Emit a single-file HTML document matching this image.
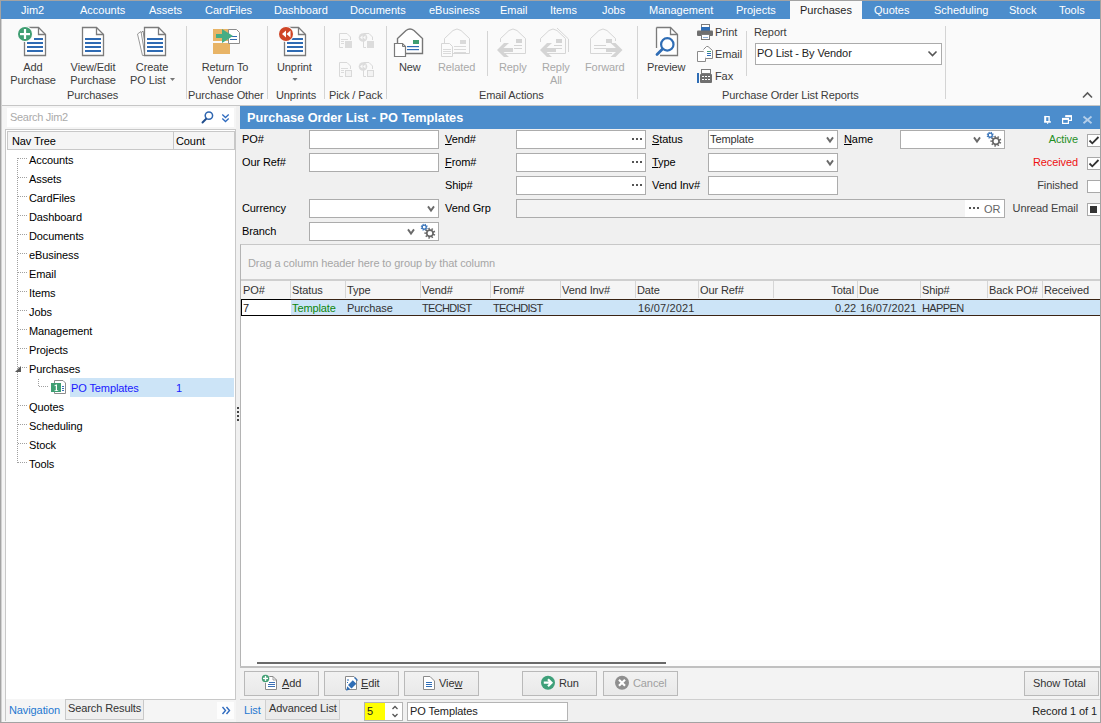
<!DOCTYPE html>
<html><head><meta charset="utf-8">
<style>
*{margin:0;padding:0;box-sizing:border-box}
html,body{width:1101px;height:723px;overflow:hidden;background:#f0f0f0;font-family:"Liberation Sans",sans-serif;font-size:11px;color:#000}
.a{position:absolute}
.t{position:absolute;white-space:nowrap;line-height:13px;font-size:11px;letter-spacing:-0.1px}
#frame{position:absolute;left:0;top:0;width:1101px;height:723px;border:1px solid #a3a3a3}
#tabs{position:absolute;left:1px;top:1px;width:1099px;height:18px;background:#4c8dcc}
.tab{position:absolute;top:3px;color:#fff;white-space:nowrap;line-height:13px}
#ribbon{position:absolute;left:1px;top:19px;width:1099px;height:86px;background:#fafafa}
.rl{position:absolute;white-space:nowrap;line-height:13px;letter-spacing:-0.1px;color:#3c3c3c;text-align:center}
.gl.dis,.rl.dis{color:#a9a9a9}
.sep{position:absolute;width:1px;background:#d6d6d6}
.inp{background:#fff;border:1px solid #acacac}
u{text-decoration:underline;text-underline-offset:1px}
.btn{background:linear-gradient(#f2f2f2,#e9e9e9);border:1px solid #b9b9b9}
.gl{position:absolute;white-space:nowrap;line-height:13px;letter-spacing:-0.1px;color:#3c3c3c}
</style></head><body>
<div id="tabs">
 <div class="tab" style="left:20px">Jim2</div>
 <div class="tab" style="left:79px">Accounts</div>
 <div class="tab" style="left:148px">Assets</div>
 <div class="tab" style="left:204px">CardFiles</div>
 <div class="tab" style="left:273px">Dashboard</div>
 <div class="tab" style="left:349px">Documents</div>
 <div class="tab" style="left:428px">eBusiness</div>
 <div class="tab" style="left:499px">Email</div>
 <div class="tab" style="left:549px">Items</div>
 <div class="tab" style="left:601px">Jobs</div>
 <div class="tab" style="left:648px">Management</div>
 <div class="tab" style="left:735px">Projects</div>
 <div class="a" style="left:789px;top:0;width:72px;height:18px;background:#fafafa"></div>
 <div class="tab" style="left:799px;color:#1e1e1e">Purchases</div>
 <div class="tab" style="left:873px">Quotes</div>
 <div class="tab" style="left:933px">Scheduling</div>
 <div class="tab" style="left:1008px">Stock</div>
 <div class="tab" style="left:1058px">Tools</div>
</div>
<div id="ribbon"></div>
<svg class="a" style="left:0;top:0" width="1101" height="106" viewBox="0 0 1101 106">
 <defs>
  <g id="doc">
   <path d="M0.5 0.5H14.5L21.5 7.5V28.5H0.5Z" fill="#fff" stroke="#7b7b7b" stroke-width="1.3"/>
   <path d="M14.5 0.5V7.5H21.5" fill="none" stroke="#7b7b7b" stroke-width="1.3"/>
   <g fill="#2f6bb3"><rect x="3" y="11" width="16" height="2"/><rect x="3" y="15" width="16" height="2"/><rect x="3" y="19" width="16" height="2"/><rect x="3" y="23" width="16" height="2"/></g>
  </g>
 </defs>
 <!-- Add Purchase -->
 <use href="#doc" x="24" y="27"/>
 <rect x="26" y="37" width="8" height="3" fill="#fff"/>
 <circle cx="25" cy="34" r="8" fill="#fafafa"/>
 <circle cx="25" cy="34" r="7" fill="#3f9e72"/>
 <rect x="20" y="33" width="10" height="2.2" fill="#fff"/><rect x="23.9" y="29" width="2.2" height="10" fill="#fff"/>
 <!-- View/Edit -->
 <use href="#doc" x="82" y="27"/>
 <!-- Create PO List -->
 <path d="M140.5 33.5 L143 31 L147 55.5 L144.5 55.5Z" fill="#fff" stroke="#8a8a8a" stroke-width="1"/>
 <path d="M137.5 34 L141 31.5 L145 55.5 L142.5 55.5Z" fill="#fff" stroke="#9a9a9a" stroke-width="1"/>
 <use href="#doc" x="144" y="27"/>
 <!-- Return To Vendor -->
 <rect x="213" y="29" width="17" height="12" fill="#e8b466"/>
 <rect x="213" y="43" width="17" height="11" fill="#e8b466"/>
 <path d="M228.5 29.5H236.5L239.5 32.5V43.5H228.5Z" fill="#fff" stroke="#8c8c8c" stroke-width="1"/>
 <rect x="230" y="36" width="7" height="1" fill="#2f6bb3"/><rect x="230" y="39" width="7" height="1" fill="#2f6bb3"/>
 <path d="M216 34H222V29L233 36L222 43V38H216Z" fill="#46ad84"/>
 <!-- Unprint -->
 <use href="#doc" x="284" y="27"/>
 <circle cx="286" cy="34" r="8" fill="#fafafa"/>
 <circle cx="286" cy="34" r="7" fill="#cf4526"/>
 <path d="M282 34L286 30.5V37.5Z M286.5 34L290.5 30.5V37.5Z" fill="#fff"/>
 <!-- Pick/Pack disabled -->
 <g fill="none" stroke="#d9d9d9" stroke-width="1">
  <path d="M339.5 33.5H347L350.5 37V40M343 47.5H339.5V33.5"/>
  <path d="M339.5 62.5H347L350.5 66V69M343 76.5H339.5V62.5"/>
  <path d="M363.5 33.5H369L372.5 37V40M366 47.5H363.5V40"/>
  <path d="M363.5 62.5H369L372.5 66V69M366 76.5H363.5V69"/>
 </g>
 <g fill="#dcdcdc">
  <rect x="341" y="39" width="7" height="1"/><rect x="341" y="41" width="3" height="1"/><rect x="341" y="43" width="3" height="1"/>
  <rect x="345" y="41" width="7" height="7"/><rect x="367" y="41" width="7" height="7"/>
  <rect x="341" y="68" width="7" height="1"/><rect x="341" y="70" width="3" height="1"/><rect x="341" y="72" width="3" height="1"/>
  <circle cx="363" cy="37.5" r="4.3"/><circle cx="363" cy="66.5" r="4.3"/>
 </g>
 <g fill="#fafafa"><path d="M360 37.5L362.5 35.5V39.5Z M363 37.5L365.5 35.5V39.5Z"/><path d="M360 66.5L362.5 64.5V68.5Z M363 66.5L365.5 64.5V68.5Z"/>
 </g>
 <g fill="#f3f3f3" stroke="#d9d9d9"><rect x="345.5" y="70.5" width="6" height="6"/><rect x="367.5" y="70.5" width="6" height="6"/></g>
 <!-- New email -->
 <path d="M397.5 53V38.5L406 30.5Q410 27.5 414 30.5L422.5 38.5V53.5H405" fill="#fff" stroke="#767676" stroke-width="1.4"/>
 <path d="M394.5 43.5H402.5L405.5 46.5V56.5H394.5Z" fill="#fff" stroke="#7b7b7b" stroke-width="1.2"/>
 <path d="M402.5 43.5V46.5H405.5" fill="none" stroke="#7b7b7b" stroke-width="1"/>
 <rect x="413" y="40" width="6" height="4" fill="#3f9e72"/>
 <rect x="407" y="46" width="12" height="1.2" fill="#2f6bb3"/><rect x="407" y="49" width="12" height="1.2" fill="#2f6bb3"/>
 <!-- Related -->
 <g stroke="#d6d6d6" fill="none" stroke-width="1">
 <path d="M444.5 53V38.5L453 30.5Q457 27.5 461 30.5L469.5 38.5V53.5H452" fill="#fbfbfb"/>
 <path d="M441.5 43.5H449.5L452.5 46.5V56.5H441.5Z" fill="#fbfbfb"/>
 </g>
 <g fill="#dadada"><rect x="460" y="40" width="6" height="4"/><rect x="454" y="46" width="12" height="1"/><rect x="454" y="49" width="12" height="1"/><rect x="454" y="52" width="12" height="1"/>
 <rect x="443" y="49" width="8" height="1"/><rect x="443" y="51" width="8" height="1"/><rect x="443" y="53" width="8" height="1"/></g>
 <!-- Reply -->
 <g stroke="#d6d6d6" fill="none" stroke-width="1">
  <path d="M500.5 42V38.5L509 30.5Q513 27.5 517 30.5L525.5 38.5V53.5H505"/>
  <path d="M540.5 42V38.5L549 30.5Q553 27.5 557 30.5L565.5 38.5V53.5H545"/>
  <path d="M557 28L568.5 39V52"/>
  <path d="M590.5 53.5V38.5L599 30.5Q603 27.5 607 30.5L615.5 38.5V41M612 53.5H590.5"/>
 </g>
 <g fill="#d4d4d4">
  <path d="M497 50L504 43H509L503.5 48H513V52H503.5L509 57H504Z"/>
  <path d="M540 50L547 43H552L546.5 48H556V52H546.5L552 57H547Z"/>
  <path d="M622.5 50L615.5 43H610.5L616 48H606V52H616L610.5 57H615.5Z"/>
  <rect x="516" y="39" width="6" height="4"/><rect x="514" y="45" width="8" height="1"/><rect x="514" y="48" width="8" height="1"/>
  <rect x="556" y="39" width="6" height="4"/><rect x="554" y="45" width="8" height="1"/><rect x="554" y="48" width="8" height="1"/>
  <rect x="606" y="39" width="6" height="4"/><rect x="594" y="45" width="12" height="1"/><rect x="594" y="48" width="12" height="1"/>
 </g>
 <!-- Preview -->
 <path d="M656.5 27.5H670.5L677.5 34.5V55.5H660" fill="#fff" stroke="#7b7b7b" stroke-width="1.3"/>
 <path d="M656.5 27.5V48" fill="none" stroke="#7b7b7b" stroke-width="1.3"/>
 <path d="M670.5 27.5V34.5H677.5" fill="none" stroke="#7b7b7b" stroke-width="1.3"/>
 <circle cx="667.3" cy="44.4" r="6.2" fill="#fff" stroke="#2f6db5" stroke-width="2.2"/>
 <path d="M657 54.5L662.5 49" stroke="#2f6db5" stroke-width="2.8" stroke-linecap="round"/>
 <!-- Print -->
 <rect x="701.5" y="24.5" width="8" height="4" fill="#fff" stroke="#7b7b7b"/>
 <rect x="701" y="27" width="9" height="4" fill="#2f6db5"/>
 <rect x="697" y="30.5" width="16" height="5.5" rx="1" fill="#6f6f6f"/>
 <rect x="701.5" y="34.5" width="8" height="5" fill="#fff" stroke="#7b7b7b"/>
 <rect x="703" y="37" width="5" height="1" fill="#8fb0d8"/>
 <!-- Email small -->
 <path d="M697.5 61.5V51.5H703.5L705.5 53.5V61.5Z" fill="#fff" stroke="#8a8a8a"/>
 <path d="M703.5 49.5L706.5 46.5H708L712.5 50.5V58.5H705.5" fill="#fff" stroke="#8a8a8a"/>
 <rect x="707" y="51" width="4" height="1" fill="#3f9e72"/><rect x="707" y="53" width="4" height="1" fill="#2f6db5"/><rect x="707" y="55" width="4" height="1" fill="#2f6db5"/>
 <!-- Fax -->
 <rect x="697" y="73" width="2" height="10" fill="#2f6db5"/>
 <rect x="701.5" y="69.5" width="9" height="4" fill="#fff" stroke="#7b7b7b"/>
 <rect x="700" y="74" width="12" height="9" rx="1" fill="#6f6f6f"/>
 <g fill="#fff"><rect x="702" y="76" width="2" height="1"/><rect x="705" y="76" width="2" height="1"/><rect x="708" y="76" width="2" height="1"/><rect x="702" y="79" width="2" height="1"/><rect x="705" y="79" width="2" height="1"/><rect x="708" y="79" width="2" height="1"/></g>
 <!-- separators -->
 <g fill="#d4d4d4">
  <rect x="186" y="26" width="1" height="73"/><rect x="267" y="26" width="1" height="73"/><rect x="324" y="26" width="1" height="73"/>
  <rect x="386" y="26" width="1" height="73"/><rect x="487" y="31" width="1" height="45"/><rect x="637" y="26" width="1" height="73"/>
  <rect x="746" y="31" width="1" height="45"/><rect x="945" y="26" width="1" height="73"/>
 </g>
 <!-- dropdown arrows -->
 <path d="M170 78H175L172.5 81Z" fill="#777"/>
 <path d="M292.5 78H297.5L295 81Z" fill="#777"/>
 <!-- collapse caret -->
 <path d="M1083 97.5L1087.5 93L1092 97.5" fill="none" stroke="#5a5a5a" stroke-width="1.6"/>
 <!-- ribbon bottom line -->
 <rect x="1" y="105" width="1099" height="1" fill="#c6c6c6"/>
</svg>
<div class="rl" style="left:12px;top:61px;width:42px">Add</div>
<div class="rl" style="left:2px;top:74px;width:62px">Purchase</div>
<div class="rl" style="left:62px;top:61px;width:62px">View/Edit</div>
<div class="rl" style="left:62px;top:74px;width:62px">Purchase</div>
<div class="rl" style="left:121px;top:61px;width:62px">Create</div>
<div class="gl" style="left:130px;top:74px">PO List</div>
<div class="gl" style="left:67px;top:89px">Purchases</div>
<div class="rl" style="left:190px;top:61px;width:70px">Return To</div>
<div class="rl" style="left:190px;top:74px;width:70px">Vendor</div>
<div class="gl" style="left:188px;top:89px">Purchase Other</div>
<div class="gl" style="left:277px;top:61px">Unprint</div>
<div class="gl" style="left:276px;top:89px">Unprints</div>
<div class="gl" style="left:329px;top:89px">Pick / Pack</div>
<div class="gl" style="left:399px;top:61px">New</div>
<div class="gl dis" style="left:438px;top:61px">Related</div>
<div class="gl dis" style="left:499px;top:61px">Reply</div>
<div class="gl dis" style="left:542px;top:61px">Reply</div>
<div class="gl dis" style="left:550px;top:74px">All</div>
<div class="gl dis" style="left:585px;top:61px">Forward</div>
<div class="gl" style="left:479px;top:89px">Email Actions</div>
<div class="gl" style="left:647px;top:61px">Preview</div>
<div class="gl" style="left:715px;top:26px">Print</div>
<div class="gl" style="left:715px;top:48px">Email</div>
<div class="gl" style="left:715px;top:70px">Fax</div>
<div class="gl" style="left:754px;top:26px">Report</div>
<div class="a" style="left:755px;top:43px;width:187px;height:22px;background:#fff;border:1px solid #ababab"></div>
<div class="gl" style="left:757px;top:47px;color:#222">PO List - By Vendor</div>
<svg class="a" style="left:927px;top:49px" width="12" height="10"><path d="M1.5 2.5L5.5 6.5L9.5 2.5" fill="none" stroke="#555" stroke-width="1.6"/></svg>
<div class="gl" style="left:722px;top:89px">Purchase Order List Reports</div>


<!-- LEFT PANEL -->
<div class="a" style="left:1px;top:106px;width:235px;height:616px;background:#f5f5f5"></div>
<div class="a" style="left:236px;top:106px;width:4px;height:616px;background:#f0f0f0"></div>
<div class="a" style="left:7px;top:108px;width:227px;height:19px;background:#fff"></div>
<div class="t" style="left:10px;top:111px;color:#ababab;letter-spacing:-0.3px">Search Jim2</div>
<svg class="a" style="left:200px;top:110px" width="32" height="16">
 <circle cx="8.9" cy="5.6" r="3.7" fill="none" stroke="#2f66b0" stroke-width="1.5"/>
 <path d="M2.5 12.5L6 9" stroke="#1f4c8c" stroke-width="1.9" stroke-linecap="round"/>
 <path d="M22.3 4.5L25.5 7.5L28.7 4.5M22.3 8.5L25.5 11.5L28.7 8.5" fill="none" stroke="#2f6bbf" stroke-width="1.3"/>
</svg>
<div class="a" style="left:5px;top:129px;width:231px;height:571px;background:#fff;border:1px solid #c8c8c8;border-bottom:none"></div>
<div class="a" style="left:5px;top:699px;width:231px;height:22px;background:#f5f5f5;border-left:1px solid #c8c8c8"></div>
<div class="a" style="left:143px;top:699px;width:93px;height:1px;background:#c8c8c8"></div>
<div class="a" style="left:7px;top:131px;width:228px;height:19px;background:#f5f5f5;border:1px solid #c8c8c8"></div>
<div class="a" style="left:173px;top:132px;width:1px;height:17px;background:#c8c8c8"></div>
<div class="t" style="left:12px;top:135px">Nav Tree</div>
<div class="t" style="left:176px;top:135px">Count</div>
<div class="t" style="left:29px;top:154px">Accounts</div>
<div class="t" style="left:29px;top:173px">Assets</div>
<div class="t" style="left:29px;top:192px">CardFiles</div>
<div class="t" style="left:29px;top:211px">Dashboard</div>
<div class="t" style="left:29px;top:230px">Documents</div>
<div class="t" style="left:29px;top:249px">eBusiness</div>
<div class="t" style="left:29px;top:268px">Email</div>
<div class="t" style="left:29px;top:287px">Items</div>
<div class="t" style="left:29px;top:306px">Jobs</div>
<div class="t" style="left:29px;top:325px">Management</div>
<div class="t" style="left:29px;top:344px">Projects</div>
<div class="t" style="left:29px;top:363px">Purchases</div>
<div class="a" style="left:70px;top:378px;width:164px;height:19px;background:#cce4f7"></div>
<div class="t" style="left:71px;top:382px;color:#1a1aff">PO Templates</div>
<div class="t" style="left:176px;top:382px;color:#1a1aff">1</div>
<div class="t" style="left:29px;top:401px">Quotes</div>
<div class="t" style="left:29px;top:420px">Scheduling</div>
<div class="t" style="left:29px;top:439px">Stock</div>
<div class="t" style="left:29px;top:458px">Tools</div>
<svg class="a" style="left:0;top:0" width="240" height="723">
 <g stroke="#a0a0a0" stroke-width="1" stroke-dasharray="1 1" fill="none">
  <path d="M17.5 158V463"/>
  <path d="M18 158.5H28"/>
  <path d="M18 177.5H28"/>
  <path d="M18 196.5H28"/>
  <path d="M18 215.5H28"/>
  <path d="M18 234.5H28"/>
  <path d="M18 253.5H28"/>
  <path d="M18 272.5H28"/>
  <path d="M18 291.5H28"/>
  <path d="M18 310.5H28"/>
  <path d="M18 329.5H28"/>
  <path d="M18 348.5H28"/>
  <path d="M18 367.5H28"/>
  <path d="M18 405.5H28"/>
  <path d="M18 424.5H28"/>
  <path d="M18 443.5H28"/>
  <path d="M18 462.5H28"/>
  <path d="M38.5 379V386.5H49"/>
 </g>
 <path d="M15 372H21V366Z" fill="#5a5a5a"/>
 <path d="M54.5 380.5H63L65.5 383V393.5H54.5Z" fill="#fff" stroke="#8c8c8c"/>
 <rect x="51" y="383" width="10" height="9" fill="#3f9e72"/>
 <path d="M54.6 385.3L56.2 384.4H57V390.2H58.2V391H54.6V390.2H55.8V385.8L54.6 386.2Z" fill="#fff"/>
 <g fill="#3a6fb5"><rect x="62" y="386" width="2" height="1"/><rect x="62" y="388" width="2" height="1"/><rect x="62" y="390" width="2" height="1"/></g>
 <g fill="#444"><rect x="237" y="407" width="2" height="2"/><rect x="237" y="411" width="2" height="2"/><rect x="237" y="415" width="2" height="2"/><rect x="237" y="419" width="2" height="2"/></g>
</svg>
<div class="a" style="left:65px;top:699px;width:79px;height:21px;background:#efefef;border:1px solid #c9c9c9;border-top-color:#c8c8c8"></div>
<div class="t" style="left:9px;top:704px;color:#1f78d1">Navigation</div>
<div class="t" style="left:68px;top:702px;color:#333">Search Results</div>
<div class="a" style="left:217px;top:702px;width:17px;height:17px;background:#fdfdfd"></div>
<svg class="a" style="left:221px;top:706px" width="11" height="10"><path d="M1.5 1L4.5 4.5L1.5 8M5.5 1L8.5 4.5L5.5 8" fill="none" stroke="#2f6bbf" stroke-width="1.4"/></svg>

<!-- RIGHT PANEL -->
<div class="a" style="left:240px;top:106px;width:860px;height:23px;background:#4c8dcc"></div>
<div class="t" style="left:247px;top:111px;color:#fff;font-weight:bold;font-size:12.7px;line-height:15px;letter-spacing:0">Purchase Order List - PO Templates</div>
<svg class="a" style="left:1040px;top:112px" width="56" height="14">
 <path d="M5.1 4.6H9.1V9.6H5.1Z" fill="none" stroke="#fff" stroke-width="1.3"/>
 <rect x="4.4" y="3.9" width="1.8" height="6" fill="#fff"/>
 <rect x="4" y="9.3" width="7" height="1.3" fill="#fff"/><rect x="7" y="10.4" width="1.2" height="1.4" fill="#fff"/>
 <path d="M25.8 4.2H31.4V8.4H28" fill="none" stroke="#fff" stroke-width="1.2"/>
 <rect x="25.2" y="3.2" width="6.8" height="2" fill="#fff"/>
 <rect x="22.6" y="6.8" width="5.8" height="4.6" fill="#4c8dcc" stroke="#fff" stroke-width="1.2"/>
 <rect x="22" y="5.9" width="7" height="2" fill="#fff"/>
 <path d="M43.5 4.5L51.5 11.2M51.5 4.5L43.5 11.2" stroke="#b5cfea" stroke-width="1.8"/>
</svg>
<div class="a" style="left:240px;top:129px;width:860px;height:115px;background:#f0f0f0"></div>
<div class="t" style="left:242px;top:133px">PO#</div>
<div class="t" style="left:242px;top:156px">Our Ref#</div>
<div class="t" style="left:242px;top:202px">Currency</div>
<div class="t" style="left:242px;top:225px">Branch</div>
<div class="t" style="left:445px;top:133px"><u>V</u>end#</div>
<div class="t" style="left:445px;top:156px"><u>F</u>rom#</div>
<div class="t" style="left:445px;top:179px">Ship#</div>
<div class="t" style="left:445px;top:202px">Vend Grp</div>
<div class="t" style="left:652px;top:133px"><u>S</u>tatus</div>
<div class="t" style="left:652px;top:156px"><u>T</u>ype</div>
<div class="t" style="left:652px;top:179px">Vend Inv#</div>
<div class="t" style="left:844px;top:133px"><u>N</u>ame</div>
<div class="t" style="right:23px;top:133px;color:#1f8f1f">Active</div>
<div class="t" style="right:23px;top:156px;color:#ee1111">Received</div>
<div class="t" style="right:23px;top:179px;color:#404040">Finished</div>
<div class="t" style="right:23px;top:202px;color:#404040">Unread Email</div>
<div class="a inp" style="left:309px;top:130px;width:130px;height:19px"></div>
<div class="a inp" style="left:309px;top:153px;width:130px;height:19px"></div>
<div class="a inp" style="left:309px;top:199px;width:130px;height:19px"></div><svg class="a" style="left:427px;top:205px" width="9" height="8"><path d="M1 1.4L4 5.6L7 1.4" fill="none" stroke="#6a6a6a" stroke-width="1.9"/></svg>
<div class="a inp" style="left:309px;top:222px;width:130px;height:19px"></div><svg class="a" style="left:406.5px;top:228px" width="9" height="8"><path d="M1 1.4L4 5.6L7 1.4" fill="none" stroke="#6a6a6a" stroke-width="1.9"/></svg><svg class="a" style="left:420px;top:223px" width="16" height="16" viewBox="0 0 16 16"><path d="M6.80 4.20 L6.74 4.76 L7.72 4.97 L7.23 6.14 L6.39 5.60 L6.04 6.04 L5.60 6.39 L6.14 7.23 L4.97 7.72 L4.76 6.74 L4.20 6.80 L3.64 6.74 L3.43 7.72 L2.26 7.23 L2.80 6.39 L2.36 6.04 L2.01 5.60 L1.17 6.14 L0.68 4.97 L1.66 4.76 L1.60 4.20 L1.66 3.64 L0.68 3.43 L1.17 2.26 L2.01 2.80 L2.36 2.36 L2.80 2.01 L2.26 1.17 L3.43 0.68 L3.64 1.66 L4.20 1.60 L4.76 1.66 L4.97 0.68 L6.14 1.17 L5.60 2.01 L6.04 2.36 L6.39 2.80 L7.23 2.26 L7.72 3.43 L6.74 3.64Z M5.60 4.20 A1.4 1.4 0 1 0 2.80 4.20 A1.4 1.4 0 1 0 5.60 4.20Z" fill="#2f6db5" fill-rule="evenodd"/><path d="M13.90 10.20 L13.83 10.96 L15.30 11.25 L14.71 12.87 L13.40 12.14 L12.96 12.77 L12.42 13.31 L13.36 14.47 L11.87 15.33 L11.33 13.93 L10.59 14.14 L9.83 14.20 L9.80 15.70 L8.11 15.40 L8.60 13.98 L7.90 13.66 L7.28 13.22 L6.29 14.35 L5.19 13.03 L6.47 12.26 L6.14 11.57 L5.95 10.83 L4.47 11.06 L4.47 9.34 L5.95 9.57 L6.14 8.83 L6.47 8.14 L5.19 7.37 L6.29 6.05 L7.28 7.18 L7.90 6.74 L8.60 6.42 L8.11 5.00 L9.80 4.70 L9.83 6.20 L10.59 6.26 L11.33 6.47 L11.87 5.07 L13.36 5.93 L12.42 7.09 L12.96 7.63 L13.40 8.26 L14.71 7.53 L15.30 9.15 L13.83 9.44Z M12.20 10.20 A2.3 2.3 0 1 0 7.60 10.20 A2.3 2.3 0 1 0 12.20 10.20Z" fill="#666" fill-rule="evenodd"/></svg>
<div class="a inp" style="left:516px;top:130px;width:130px;height:19px"></div><svg class="a" style="left:632px;top:138px" width="11" height="3"><g fill="#555"><rect x="0" y="0" width="2" height="2"/><rect x="4" y="0" width="2" height="2"/><rect x="8" y="0" width="2" height="2"/></g></svg>
<div class="a inp" style="left:516px;top:153px;width:130px;height:19px"></div><svg class="a" style="left:632px;top:161px" width="11" height="3"><g fill="#555"><rect x="0" y="0" width="2" height="2"/><rect x="4" y="0" width="2" height="2"/><rect x="8" y="0" width="2" height="2"/></g></svg>
<div class="a inp" style="left:516px;top:176px;width:130px;height:19px"></div><svg class="a" style="left:632px;top:184px" width="11" height="3"><g fill="#555"><rect x="0" y="0" width="2" height="2"/><rect x="4" y="0" width="2" height="2"/><rect x="8" y="0" width="2" height="2"/></g></svg>
<div class="a inp" style="left:708px;top:130px;width:130px;height:19px"></div><svg class="a" style="left:826px;top:136px" width="9" height="8"><path d="M1 1.4L4 5.6L7 1.4" fill="none" stroke="#6a6a6a" stroke-width="1.9"/></svg>
<div class="t" style="left:710px;top:133px;color:#333">Template</div>
<div class="a inp" style="left:708px;top:153px;width:130px;height:19px"></div><svg class="a" style="left:826px;top:159px" width="9" height="8"><path d="M1 1.4L4 5.6L7 1.4" fill="none" stroke="#6a6a6a" stroke-width="1.9"/></svg>
<div class="a inp" style="left:708px;top:176px;width:130px;height:19px"></div>
<div class="a inp" style="left:900px;top:130px;width:105px;height:19px"></div><svg class="a" style="left:973px;top:136px" width="9" height="8"><path d="M1 1.4L4 5.6L7 1.4" fill="none" stroke="#6a6a6a" stroke-width="1.9"/></svg><svg class="a" style="left:986px;top:131px" width="16" height="16" viewBox="0 0 16 16"><path d="M6.80 4.20 L6.74 4.76 L7.72 4.97 L7.23 6.14 L6.39 5.60 L6.04 6.04 L5.60 6.39 L6.14 7.23 L4.97 7.72 L4.76 6.74 L4.20 6.80 L3.64 6.74 L3.43 7.72 L2.26 7.23 L2.80 6.39 L2.36 6.04 L2.01 5.60 L1.17 6.14 L0.68 4.97 L1.66 4.76 L1.60 4.20 L1.66 3.64 L0.68 3.43 L1.17 2.26 L2.01 2.80 L2.36 2.36 L2.80 2.01 L2.26 1.17 L3.43 0.68 L3.64 1.66 L4.20 1.60 L4.76 1.66 L4.97 0.68 L6.14 1.17 L5.60 2.01 L6.04 2.36 L6.39 2.80 L7.23 2.26 L7.72 3.43 L6.74 3.64Z M5.60 4.20 A1.4 1.4 0 1 0 2.80 4.20 A1.4 1.4 0 1 0 5.60 4.20Z" fill="#2f6db5" fill-rule="evenodd"/><path d="M13.90 10.20 L13.83 10.96 L15.30 11.25 L14.71 12.87 L13.40 12.14 L12.96 12.77 L12.42 13.31 L13.36 14.47 L11.87 15.33 L11.33 13.93 L10.59 14.14 L9.83 14.20 L9.80 15.70 L8.11 15.40 L8.60 13.98 L7.90 13.66 L7.28 13.22 L6.29 14.35 L5.19 13.03 L6.47 12.26 L6.14 11.57 L5.95 10.83 L4.47 11.06 L4.47 9.34 L5.95 9.57 L6.14 8.83 L6.47 8.14 L5.19 7.37 L6.29 6.05 L7.28 7.18 L7.90 6.74 L8.60 6.42 L8.11 5.00 L9.80 4.70 L9.83 6.20 L10.59 6.26 L11.33 6.47 L11.87 5.07 L13.36 5.93 L12.42 7.09 L12.96 7.63 L13.40 8.26 L14.71 7.53 L15.30 9.15 L13.83 9.44Z M12.20 10.20 A2.3 2.3 0 1 0 7.60 10.20 A2.3 2.3 0 1 0 12.20 10.20Z" fill="#666" fill-rule="evenodd"/></svg>
<div class="a inp" style="left:516px;top:199px;width:489px;height:19px;background:#f3f3f3"></div>
<div class="a" style="left:965px;top:200px;width:39px;height:17px;background:#fff"></div>
<svg class="a" style="left:969px;top:207px" width="11" height="3"><g fill="#555"><rect x="0" y="0" width="2" height="2"/><rect x="4" y="0" width="2" height="2"/><rect x="8" y="0" width="2" height="2"/></g></svg>
<div class="t" style="left:984px;top:203px;color:#666">OR</div>
<div class="a" style="left:1087px;top:134px;width:13px;height:13px;background:#fff;border:1px solid #a9a9a9;border-right:none"></div><svg class="a" style="left:1088px;top:135px" width="12" height="11"><path d="M1.5 5.5L4.3 8.3L10.5 2" fill="none" stroke="#333" stroke-width="1.8"/></svg>
<div class="a" style="left:1087px;top:157px;width:13px;height:13px;background:#fff;border:1px solid #a9a9a9;border-right:none"></div><svg class="a" style="left:1088px;top:158px" width="12" height="11"><path d="M1.5 5.5L4.3 8.3L10.5 2" fill="none" stroke="#333" stroke-width="1.8"/></svg>
<div class="a" style="left:1087px;top:180px;width:13px;height:13px;background:#fff;border:1px solid #a9a9a9;border-right:none"></div>
<div class="a" style="left:1087px;top:203px;width:13px;height:13px;background:#fff;border:1px solid #a9a9a9;border-right:none"></div><div class="a" style="left:1090px;top:206px;width:7px;height:7px;background:#333"></div>
<!-- GRID -->
<div class="a" style="left:240px;top:244px;width:860px;height:423px;background:#fff;border-left:1px solid #b4b4b4;border-top:1px solid #c8c8c8"></div>
<div class="a" style="left:241px;top:245px;width:859px;height:34px;background:#f5f5f5"></div>
<div class="t" style="left:248px;top:257px;color:#a6a6a6">Drag a column header here to group by that column</div>
<div class="a" style="left:241px;top:279px;width:859px;height:2px;background:#cfcfcf"></div>
<div class="a" style="left:241px;top:281px;width:859px;height:18px;background:#f5f5f5"></div>
<div class="a" style="left:290px;top:281px;width:1px;height:17px;background:#d6d6d6"></div>
<div class="a" style="left:345px;top:281px;width:1px;height:17px;background:#d6d6d6"></div>
<div class="a" style="left:420px;top:281px;width:1px;height:17px;background:#d6d6d6"></div>
<div class="a" style="left:490px;top:281px;width:1px;height:17px;background:#d6d6d6"></div>
<div class="a" style="left:560px;top:281px;width:1px;height:17px;background:#d6d6d6"></div>
<div class="a" style="left:635px;top:281px;width:1px;height:17px;background:#d6d6d6"></div>
<div class="a" style="left:698px;top:281px;width:1px;height:17px;background:#d6d6d6"></div>
<div class="a" style="left:773px;top:281px;width:1px;height:17px;background:#d6d6d6"></div>
<div class="a" style="left:857px;top:281px;width:1px;height:17px;background:#d6d6d6"></div>
<div class="a" style="left:920px;top:281px;width:1px;height:17px;background:#d6d6d6"></div>
<div class="a" style="left:987px;top:281px;width:1px;height:17px;background:#d6d6d6"></div>
<div class="a" style="left:1042px;top:281px;width:1px;height:17px;background:#d6d6d6"></div>
<div class="t" style="left:243px;top:284px;color:#333">PO#</div>
<div class="t" style="left:292px;top:284px;color:#333">Status</div>
<div class="t" style="left:347px;top:284px;color:#333">Type</div>
<div class="t" style="left:422px;top:284px;color:#333">Vend#</div>
<div class="t" style="left:493px;top:284px;color:#333">From#</div>
<div class="t" style="left:562px;top:284px;color:#333">Vend Inv#</div>
<div class="t" style="left:637px;top:284px;color:#333">Date</div>
<div class="t" style="left:700px;top:284px;color:#333">Our Ref#</div>
<div class="t" style="left:859px;top:284px;color:#333">Due</div>
<div class="t" style="left:922px;top:284px;color:#333">Ship#</div>
<div class="t" style="left:989px;top:284px;color:#333">Back PO#</div>
<div class="t" style="left:1044px;top:284px;color:#333">Received</div>
<div class="t" style="right:247px;top:284px;color:#333">Total</div>
<div class="a" style="left:241px;top:299px;width:859px;height:17px;background:#cce4f7;border-top:1px solid #3a2414;border-bottom:1px solid #3a2414"></div>
<div class="a" style="left:241px;top:299px;width:50px;height:17px;background:#fff;border:1px solid #000;border-right:none"></div>
<div class="t" style="left:243px;top:302px;color:#222">7</div>
<div class="t" style="left:292px;top:302px;color:#0d870d">Template</div>
<div class="t" style="left:347px;top:302px;color:#333">Purchase</div>
<div class="t" style="left:422px;top:302px;color:#333;letter-spacing:-0.7px">TECHDIST</div>
<div class="t" style="left:493px;top:302px;color:#333;letter-spacing:-0.7px">TECHDIST</div>
<div class="t" style="left:638px;top:302px;color:#333;letter-spacing:0.15px">16/07/2021</div>
<div class="t" style="left:860px;top:302px;color:#333;letter-spacing:0.15px">16/07/2021</div>
<div class="t" style="left:922px;top:302px;color:#333;letter-spacing:-0.6px">HAPPEN</div>
<div class="t" style="right:245px;top:302px;color:#333">0.22</div>
<div class="a" style="left:241px;top:660px;width:859px;height:6px;background:#fcfcfc"></div>
<div class="a" style="left:257px;top:662px;width:409px;height:2px;background:#686868"></div>
<div class="a" style="left:240px;top:666px;width:860px;height:2px;background:#c0c0c0"></div>
<div class="a" style="left:240px;top:668px;width:860px;height:32px;background:#f3f3f3"></div>
<div class="a btn" style="left:244px;top:671px;width:75px;height:25px"></div>
<div class="a btn" style="left:324px;top:671px;width:75px;height:25px"></div>
<div class="a btn" style="left:404px;top:671px;width:75px;height:25px"></div>
<div class="a btn" style="left:522px;top:671px;width:75px;height:25px"></div>
<div class="a btn" style="left:603px;top:671px;width:75px;height:25px"></div>
<div class="a btn" style="left:1024px;top:671px;width:75px;height:25px"></div>
<div class="t" style="left:282px;top:677px;color:#333"><u>A</u>dd</div>
<div class="t" style="left:361px;top:677px;color:#333"><u>E</u>dit</div>
<div class="t" style="left:439px;top:677px;color:#333">Vie<u>w</u></div>
<div class="t" style="left:559px;top:677px;color:#333">Run</div>
<div class="t" style="left:633px;top:677px;color:#a0a0a0">Cancel</div>
<div class="t" style="left:1033px;top:677px;color:#333">Show Total</div>
<svg class="a" style="left:240px;top:670px" width="440" height="26">
 <path d="M25.5 6.5H33L36.5 10V19.5H25.5Z" fill="#fff" stroke="#8a8a8a"/>
 <path d="M33 6.5V10H36.5" fill="none" stroke="#8a8a8a" stroke-width="0.8"/>
 <g fill="#3a6fb5"><rect x="29" y="12" width="6" height="1"/><rect x="28" y="14" width="7" height="1"/><rect x="28" y="16" width="7" height="1"/></g>
 <circle cx="25.5" cy="8.4" r="4.4" fill="#efefef"/><circle cx="25.5" cy="8.4" r="3.7" fill="#3f9e72"/>
 <rect x="23" y="7.7" width="5" height="1.4" fill="#fff"/><rect x="24.8" y="5.9" width="1.4" height="5" fill="#fff"/>
 <path d="M105.5 6.5H114L116.5 9V19.5H105.5Z" fill="#fff" stroke="#8a8a8a"/>
 <rect x="107" y="9.5" width="2" height="1" fill="#2f6db5"/><rect x="107" y="12" width="1" height="1" fill="#2f6db5"/>
 <path d="M108 15L112.8 10.2L116.3 13.7L111.5 18.5Z M106.2 20.8L107.2 16.2L110.3 19.3Z" fill="#2f6db5"/>
 <path d="M114.5 7.5L117.5 10.5" stroke="#2f6db5" stroke-width="1.2"/>
 <path d="M183.5 6.5H190L194.5 11V19.5H183.5Z" fill="#fff" stroke="#8a8a8a"/>
 <g fill="#2f6db5"><rect x="186" y="12" width="6" height="1"/><rect x="186" y="14" width="6" height="1"/><rect x="186" y="16" width="6" height="1"/></g>
 <circle cx="308" cy="12.7" r="7" fill="#3fa07a"/>
 <path d="M303.8 12.7H311M308 9.2L311.5 12.7L308 16.2" fill="none" stroke="#fff" stroke-width="2.2"/>
 <circle cx="382" cy="12.7" r="7" fill="#8f8f8f"/>
 <path d="M379 9.7L385 15.7M385 9.7L379 15.7" stroke="#fff" stroke-width="2.2"/>
</svg>
<div class="a" style="left:240px;top:699px;width:860px;height:1px;background:#cfcfcf"></div>
<div class="a" style="left:240px;top:700px;width:860px;height:22px;background:#f0f0f0"></div>
<div class="a" style="left:265px;top:699px;width:75px;height:21px;background:#ebebeb;border:1px solid #cfcfcf"></div>
<div class="t" style="left:244px;top:704px;color:#1f78d1">List</div>
<div class="t" style="left:269px;top:702px;color:#333">Advanced List</div>
<div class="a" style="left:364px;top:702px;width:39px;height:19px;background:#fff;border:1px solid #b4b4b4"></div>
<div class="a" style="left:365px;top:703px;width:20px;height:17px;background:#ffff00"></div>
<div class="t" style="left:367px;top:705px;color:#222">5</div>
<svg class="a" style="left:391px;top:705px" width="8" height="13"><path d="M1.5 4L4 1.5L6.5 4M1.5 9L4 11.5L6.5 9" fill="none" stroke="#555" stroke-width="1.3"/></svg>
<div class="a" style="left:407px;top:702px;width:161px;height:19px;background:#fff;border:1px solid #b4b4b4"></div>
<div class="t" style="left:410px;top:705px;color:#222">PO Templates</div>
<div class="t" style="right:4px;top:705px;color:#222">Record 1 of 1</div>
<div class="a" style="left:1px;top:19px;width:1px;height:703px;background:#d2d2d2"></div>
<div id="frame"></div>
</body></html>
